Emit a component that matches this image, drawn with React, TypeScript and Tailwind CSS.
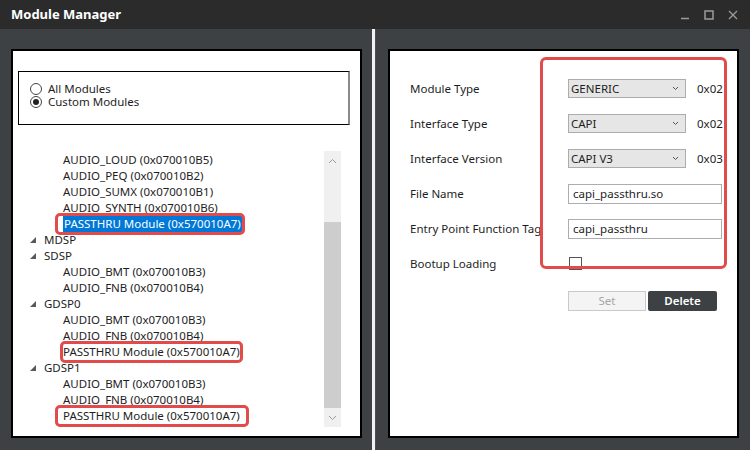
import React from 'react';

type Row = {
  text: string;
  level: 0 | 1;
  selected?: boolean;
  mark?: string;
};

const rows: Row[] = [
  { text: 'AUDIO_LOUD (0x070010B5)', level: 1 },
  { text: 'AUDIO_PEQ (0x070010B2)', level: 1 },
  { text: 'AUDIO_SUMX (0x070010B1)', level: 1 },
  { text: 'AUDIO_SYNTH (0x070010B6)', level: 1 },
  { text: 'PASSTHRU Module (0x570010A7)', level: 1, selected: true, mark: '-left-[8px] -right-[3px] -top-[3px] -bottom-[3px]' },
  { text: 'MDSP', level: 0 },
  { text: 'SDSP', level: 0 },
  { text: 'AUDIO_BMT (0x070010B3)', level: 1 },
  { text: 'AUDIO_FNB (0x070010B4)', level: 1 },
  { text: 'GDSP0', level: 0 },
  { text: 'AUDIO_BMT (0x070010B3)', level: 1 },
  { text: 'AUDIO_FNB (0x070010B4)', level: 1 },
  { text: 'PASSTHRU Module (0x570010A7)', level: 1, mark: '-left-[3px] -right-[3px] -top-[3px] -bottom-[3px]' },
  { text: 'GDSP1', level: 0 },
  { text: 'AUDIO_BMT (0x070010B3)', level: 1 },
  { text: 'AUDIO_FNB (0x070010B4)', level: 1 },
  { text: 'PASSTHRU Module (0x570010A7)', level: 1, mark: '-left-[8px] -right-[9px] -top-[3px] -bottom-[3px]' },
];

const Expander = () => (
  <svg width="7" height="7" viewBox="0 0 7 7" className="mr-[7px]">
    <polygon points="6,0 6,6 0,6" fill="#595959" />
  </svg>
);

const Radio: React.FC<{ checked?: boolean; label: string }> = ({ checked, label }) => (
  <div className="flex items-center h-[13px] leading-[13px]">
    <span className="w-[12px] h-[12px] rounded-full border border-[#444] bg-white flex items-center justify-center mr-[6px]">
      {checked && <span className="w-[6px] h-[6px] rounded-full bg-[#222]" />}
    </span>
    <span>{label}</span>
  </div>
);

const Chevron = ({ up }: { up?: boolean }) => (
  <svg width="9" height="6" viewBox="0 0 9 6">
    <polyline
      points={up ? '1,5 4.5,1.5 8,5' : '1,1 4.5,4.5 8,1'}
      fill="none"
      stroke="#9a9a9a"
      strokeWidth="1"
    />
  </svg>
);

const Select: React.FC<{ value: string; code: string }> = ({ value, code }) => (
  <div className="flex items-center">
    <div className="w-[118px] h-[19px] border border-[#acacac] bg-[#e6e6e6] flex items-center justify-between pl-[2px] pr-[6px]">
      <span>{value}</span>
      <svg width="7" height="5" viewBox="0 0 7 5">
        <polyline points="1,1 3.5,3.5 6,1" fill="none" stroke="#555" strokeWidth="1" />
      </svg>
    </div>
    <span className="ml-[11px]">{code}</span>
  </div>
);

const TextBox: React.FC<{ value: string }> = ({ value }) => (
  <div className="w-[154px] h-[20px] border border-[#abadb3] bg-white flex items-center pl-[4px]">
    {value}
  </div>
);

export default function App() {
  return (
    <div
      className="w-[750px] h-[450px] flex flex-col bg-[#3d4143] text-[11.5px] text-[#1e1e1e] overflow-hidden"
      style={{ fontFamily: '"Noto Sans", "Open Sans", sans-serif' }}
    >
      {/* title bar */}
      <div className="h-[29px] bg-[#2b2b2b] flex items-center justify-between pl-[11px] pr-[12px]">
        <span className="text-white font-bold text-[13px]">Module Manager</span>
        <div className="flex items-center gap-[14px]">
          <svg width="10" height="10" viewBox="0 0 10 10">
            <line x1="1" y1="8.5" x2="9" y2="8.5" stroke="#9c9c9c" strokeWidth="1.5" />
          </svg>
          <svg width="10" height="10" viewBox="0 0 10 10">
            <rect x="1" y="1" width="8" height="8" fill="none" stroke="#9c9c9c" strokeWidth="1.5" />
          </svg>
          <svg width="10" height="10" viewBox="0 0 10 10">
            <path d="M1 1 L9 9 M9 1 L1 9" stroke="#9c9c9c" strokeWidth="1.3" />
          </svg>
        </div>
      </div>

      {/* body */}
      <div className="flex-1 flex">
        <div className="pl-[11px] pr-[10px] pt-[20px] pb-[12px] flex">
          {/* left panel */}
          <div className="w-[351px] h-[389px] border-2 border-black bg-white flex flex-col">
            <div className="mt-[20px] ml-[5px] w-[332px] h-[54px] border border-black border-r-2 border-r-[#8a8a8a] pl-[11px] pt-[10px] flex flex-col">
              <Radio label="All Modules" />
              <Radio checked label="Custom Modules" />
            </div>
            <div className="mt-[26px] flex">
              <div className="flex-1 pt-[1px]">
                {rows.map((r, i) => (
                  <div
                    key={i}
                    className={`h-[16px] flex items-center ${r.level === 0 ? 'pl-[17px]' : 'pl-[50px]'}`}
                  >
                    {r.level === 0 && <Expander />}
                    <span className="relative leading-[16px]">
                      <span className={r.selected ? 'bg-[#0078d7] text-white px-[1px] inline-block leading-[16px]' : ''}>
                        {r.text}
                      </span>
                      {r.mark && (
                        <span className={`absolute ${r.mark} border-[3px] border-[#e04b4b] rounded-[5px]`} />
                      )}
                    </span>
                  </div>
                ))}
              </div>
              <div className="w-[17px] h-[276px] bg-[#f0f0f0] mr-[19px] flex flex-col items-center">
                <div className="h-[19px] flex items-center justify-center">
                  <Chevron up />
                </div>
                <div className="h-[52px]" />
                <div className="w-full h-[186px] bg-[#cdcdcd]" />
                <div className="h-[19px] flex items-center justify-center">
                  <Chevron />
                </div>
              </div>
            </div>
          </div>
        </div>

        {/* divider */}
        <div className="w-[3px] bg-[#f2f2f2]" />
        <div className="w-[1px] bg-[#4a4e50]" />

        <div className="pl-[12px] pt-[20px] pb-[12px] flex">
          {/* right panel */}
          <div className="relative w-[351px] h-[389px] border-2 border-black bg-white pl-[20px] pt-[20px]">
            <div className="grid grid-cols-[158px_1fr] auto-rows-[35px] items-center">
              <span>Module Type</span>
              <Select value="GENERIC" code="0x02" />
              <span>Interface Type</span>
              <Select value="CAPI" code="0x02" />
              <span>Interface Version</span>
              <Select value="CAPI V3" code="0x03" />
              <span>File Name</span>
              <TextBox value="capi_passthru.so" />
              <span className="whitespace-nowrap">Entry Point Function Tag</span>
              <TextBox value="capi_passthru" />
              <span>Bootup Loading</span>
              <div className="w-[13px] h-[13px] border border-[#555] bg-white ml-[1px]" />
            </div>
            <div className="flex mt-[10px] ml-[158px] gap-[2px]">
              <div className="w-[78px] h-[20px] bg-[#f4f4f4] border border-[#c9c9c9] flex items-center justify-center text-[#a6a6a6]">
                Set
              </div>
              <div className="w-[69px] h-[20px] bg-[#3d4143] flex items-center justify-center text-white font-semibold rounded-[2px]">
                Delete
              </div>
            </div>
            {/* highlight overlay */}
            <div className="absolute left-[150px] top-[6px] w-[187px] h-[212px] border-[3px] border-[#e04b4b] rounded-[6px] pointer-events-none" />
          </div>
        </div>
      </div>
    </div>
  );
}
